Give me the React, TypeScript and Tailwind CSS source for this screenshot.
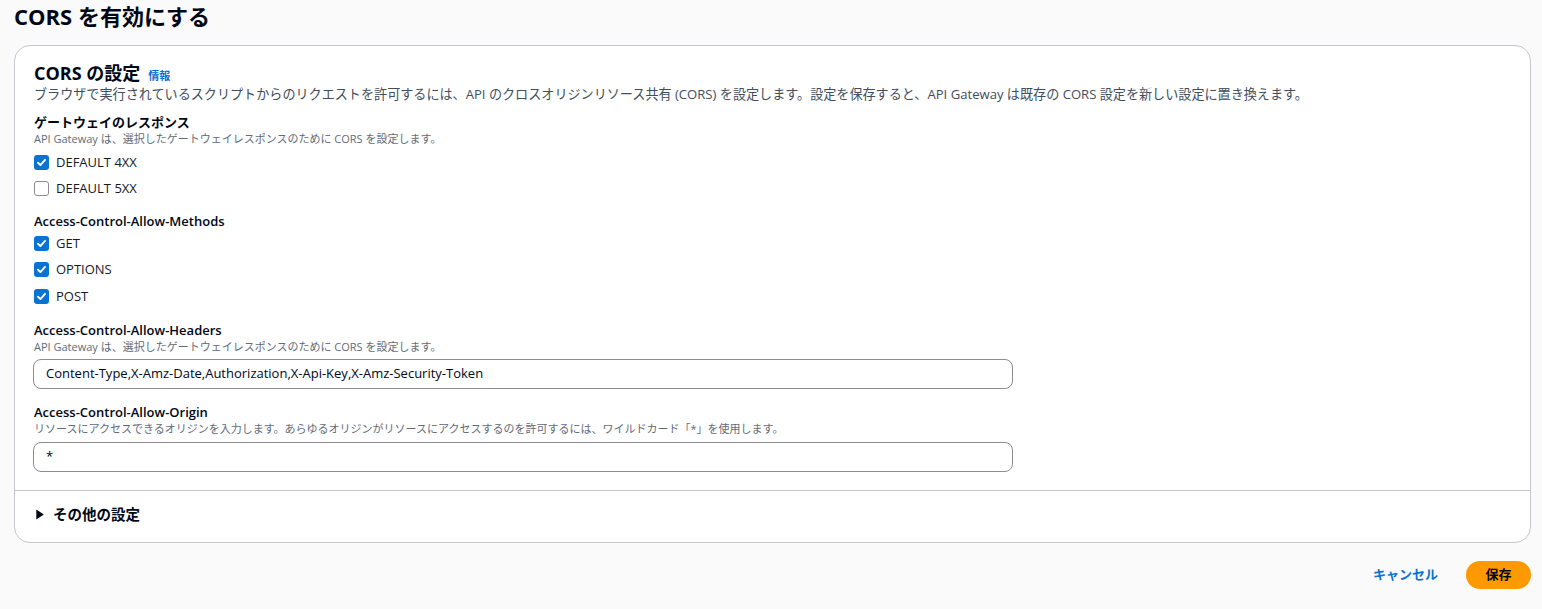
import React from 'react';

const font = { fontFamily: '"Open Sans", "Noto Sans CJK JP", sans-serif' };

const Checkbox = ({ label, checked }: { label: string; checked: boolean }) => (
    <label className="flex items-center gap-[7px] h-[26.5px]">
        {checked ? (
            <span className="w-[15px] h-[15px] rounded-[3px] bg-[#0972d3] flex items-center justify-center">
                <svg width="11" height="11" viewBox="0 0 10 10">
                    <path d="M1.8 5.2 L4 7.3 L8.2 2.6" fill="none" stroke="white" strokeWidth="1.7" strokeLinecap="round" strokeLinejoin="round" />
                </svg>
            </span>
        ) : (
            <span className="w-[15px] h-[15px] rounded-[3px] border border-[#8c8c94] bg-white" />
        )}
        <span className="text-[13px] text-[#16191f]">{label}</span>
    </label>
);

const Field = ({ label, desc, value, gap }: { label: string; desc: string; value: string; gap: string }) => (
    <div>
        <div className="text-[13px] font-semibold text-[#000716] leading-[18px]">{label}</div>
        <div className="text-[11px] text-[#5f6b7a] leading-[16px]">{desc}</div>
        <div className={`${gap} -ml-px w-[980px] h-[30px] border border-[#8c8c94] rounded-[8px] bg-white flex items-center px-3 text-[13px] text-[#000716]`}>
            {value}
        </div>
    </div>
);

export default function App() {
    return (
        <div className="min-h-[609px] bg-[#fafafa] pl-[14px] pr-[11px]" style={font}>
            <h1 className="text-[22px] font-bold text-[#000716] leading-[32px]">CORS を有効にする</h1>
            <div className="mt-[13px] bg-white border border-[#c6c6cd] rounded-[16px]">
                <div className="px-[19px] pt-[15px] pb-[18px]">
                    <div className="flex items-baseline gap-2">
                        <h2 className="text-[18px] font-bold text-[#000716] leading-[24px]">CORS の設定</h2>
                        <span className="text-[11px] font-bold text-[#0972d3]">情報</span>
                    </div>
                    <p className="text-[13.1px] text-[#414d5c] leading-[18px]">
                        ブラウザで実行されているスクリプトからのリクエストを許可するには、API のクロスオリジンリソース共有 (CORS) を設定します。設定を保存すると、API Gateway は既存の CORS 設定を新しい設定に置き換えます。
                    </p>
                    <div className="mt-[10px]">
                        <div className="text-[13px] font-semibold text-[#000716] leading-[18px]">ゲートウェイのレスポンス</div>
                        <div className="text-[11px] text-[#5f6b7a] leading-[16px]">API Gateway は、選択したゲートウェイレスポンスのために CORS を設定します。</div>
                        <div className="mt-[2px]">
                            <Checkbox label="DEFAULT 4XX" checked />
                            <Checkbox label="DEFAULT 5XX" checked={false} />
                        </div>
                    </div>
                    <div className="mt-[10px]">
                        <div className="text-[13px] font-semibold text-[#000716] leading-[18px]">Access-Control-Allow-Methods</div>
                        <div>
                            <Checkbox label="GET" checked />
                            <Checkbox label="OPTIONS" checked />
                            <Checkbox label="POST" checked />
                        </div>
                    </div>
                    <div className="mt-[11px]">
                        <Field
                            label="Access-Control-Allow-Headers"
                            desc="API Gateway は、選択したゲートウェイレスポンスのために CORS を設定します。"
                            value="Content-Type,X-Amz-Date,Authorization,X-Api-Key,X-Amz-Security-Token"
                            gap="mt-[4px]"
                        />
                    </div>
                    <div className="mt-[14px]">
                        <Field
                            label="Access-Control-Allow-Origin"
                            desc="リソースにアクセスできるオリジンを入力します。あらゆるオリジンがリソースにアクセスするのを許可するには、ワイルドカード「*」を使用します。"
                            value="*"
                            gap="mt-[5px]"
                        />
                    </div>
                </div>
                <div className="border-t border-[#c6c6cd] pl-[21px] pb-[3px] h-[52px] flex items-center gap-[9px]">
                    <svg width="8" height="11" viewBox="0 0 8 11">
                        <path d="M0.3 0.5 L7.8 5.5 L0.3 10.5 Z" fill="#000716" />
                    </svg>
                    <span className="text-[14.5px] font-bold text-[#000716]">その他の設定</span>
                </div>
            </div>
            <div className="flex justify-end items-center gap-[28px] mt-[18px]">
                <span className="text-[13px] font-bold text-[#0972d3]">キャンセル</span>
                <button className="h-[28px] px-[19.5px] rounded-full bg-[#ff9900] text-[13px] font-bold text-[#000716]">保存</button>
            </div>
        </div>
    );
}
